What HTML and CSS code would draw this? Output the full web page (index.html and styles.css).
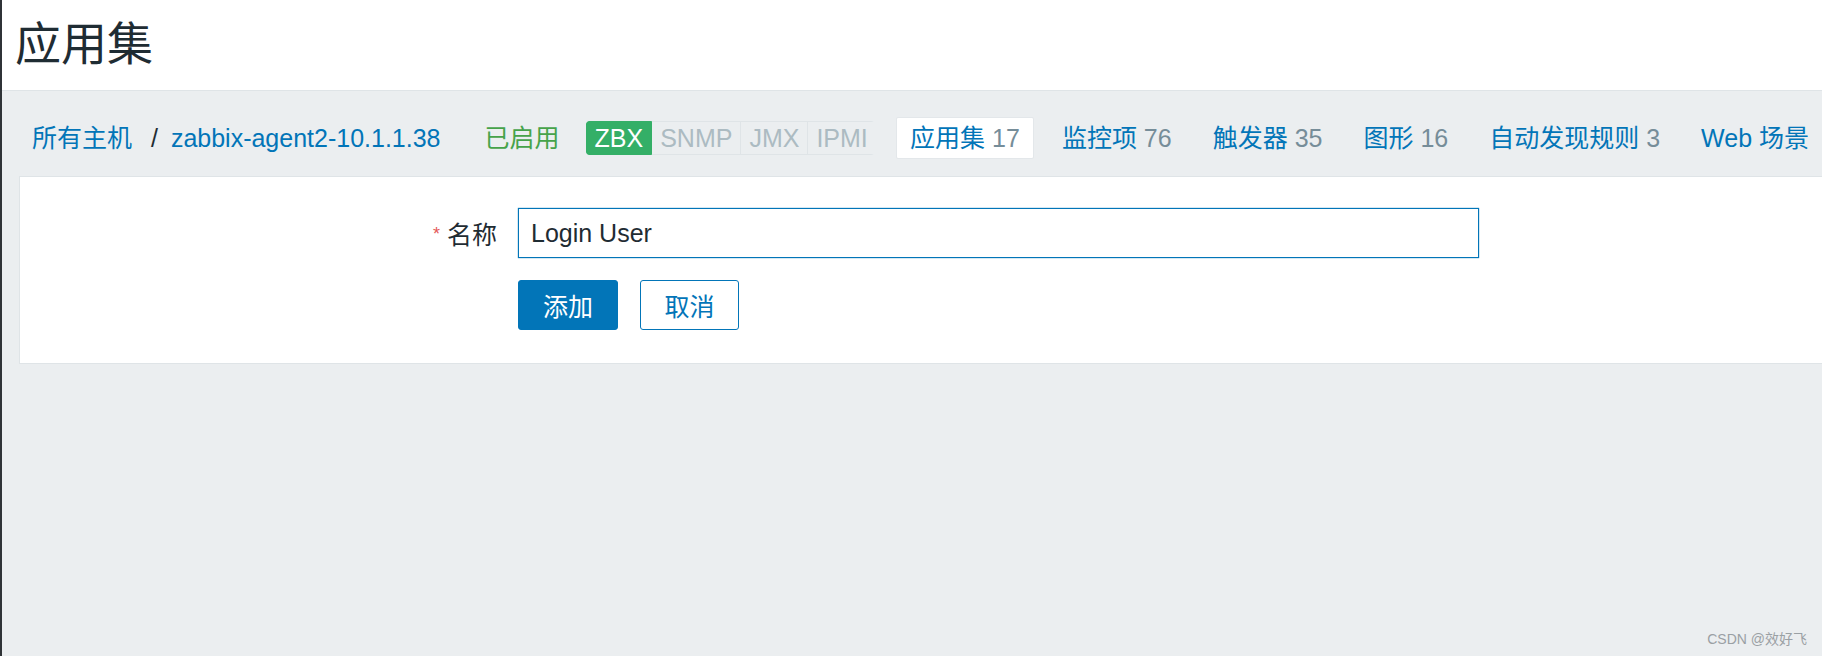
FILE: index.html
```html
<!DOCTYPE html>
<html lang="zh-CN">

<head>
    <meta charset="UTF-8">
    <meta name="viewport" content="width=device-width, initial-scale=1.0">
    <title>应用集</title>
    <link rel="stylesheet" href="styles.css">
</head>

<body>
    <header class="page-header">
        <h1 class="page-title">应用集</h1>
    </header>

    <nav class="host-nav">
        <div class="nav-item breadcrumbs">
            <a class="link">所有主机</a>
            <span class="sep">/</span>
            <a class="link">zabbix-agent2-10.1.1.38</a>
        </div>
        <div class="nav-item status-on">已启用</div>
        <div class="avail">
            <span class="avail-badge green">ZBX</span>
            <span class="avail-badge">SNMP</span>
            <span class="avail-badge">JMX</span>
            <span class="avail-badge">IPMI</span>
        </div>
        <div class="nav-item tab-active"><a class="link">应用集</a> <span class="count">17</span></div>
        <div class="nav-item"><a class="link">监控项</a> <span class="count">76</span></div>
        <div class="nav-item"><a class="link">触发器</a> <span class="count">35</span></div>
        <div class="nav-item"><a class="link">图形</a> <span class="count">16</span></div>
        <div class="nav-item"><a class="link">自动发现规则</a> <span class="count">3</span></div>
        <div class="nav-item"><a class="link">Web 场景</a></div>
    </nav>

    <main class="form-box">
        <div class="form-grid">
            <label class="form-label"><span class="req">*</span> 名称</label>
            <input class="text-input" type="text" value="Login User">
            <div></div>
            <div class="btn-row">
                <button class="btn btn-primary">添加</button>
                <button class="btn btn-alt">取消</button>
            </div>
        </div>
    </main>

    <div class="watermark">CSDN @效好飞</div>
</body>

</html>
```

FILE: styles.css
```css
* {
    box-sizing: border-box;
}

html,
body {
    margin: 0;
    height: 100%;
}

body {
    position: relative;
    background: #ebeef0;
    border-left: 2px solid #2f3337;
    color: #1f2c33;
    font-family: "Liberation Sans", "Noto Sans CJK SC", sans-serif;
    font-size: 25px;
    overflow: hidden;
}

.page-header {
    height: 91px;
    background: #fff;
    border-bottom: 1px solid #dfe4e7;
    display: flex;
    align-items: center;
    padding-left: 13px;
}

.page-title {
    margin: 0;
    font-size: 46px;
    font-weight: normal;
    line-height: 1;
    color: #1f2c33;
    padding-bottom: 2px;
}

/* 主机导航 */
.host-nav {
    display: flex;
    align-items: center;
    height: 85px;
    padding: 8px 0 0 17px;
    white-space: nowrap;
}

.nav-item {
    padding: 0 13px;
    margin-left: 15px;
    line-height: 42px;
}

.nav-item.breadcrumbs {
    margin-left: 0;
}

.link {
    color: #0275b8;
    cursor: pointer;
}

.sep {
    margin: 0 6px 0 12px;
    color: #1f2c33;
}

.count {
    color: #768d99;
}

.status-on {
    margin-left: 18px;
    color: #46a34a;
}

.avail {
    display: flex;
    margin-left: 13px;
    border-radius: 3px;
    overflow: hidden;
}

.avail-badge {
    height: 34px;
    line-height: 32px;
    padding: 0 8px;
    background: #ebeef0;
    border: 1px solid #dfe4e7;
    border-left-width: 0;
    color: #acbbc2;
}

.avail-badge:last-child {
    border-radius: 0 3px 3px 0;
}

.avail-badge.green {
    background: #34af67;
    border-color: #34af67;
    color: #fff;
    border-left-width: 1px;
    border-radius: 3px 0 0 3px;
}

.tab-active {
    margin-left: 22px;
    background: #fff;
    border: 1px solid #e3e7ea;
    border-radius: 2px;
    line-height: 40px;
}

/* 表单 */
.form-box {
    margin-left: 17px;
    background: #fff;
    border: 1px solid #dfe4e7;
    border-right: none;
    padding: 31px 0 33px 0;
}

.form-grid {
    display: grid;
    grid-template-columns: 477px 961px;
    column-gap: 21px;
    row-gap: 22px;
    align-items: center;
}

.form-label {
    text-align: right;
    color: #1f2c33;
}

.req {
    color: #e45959;
    font-size: 18px;
    vertical-align: 4px;
}

.text-input {
    width: 961px;
    height: 50px;
    padding: 0 12px;
    border: 1px solid #0275b8;
    box-shadow: 0 0 1px 0 #0275b8;
    font-family: "Liberation Sans", "Noto Sans CJK SC", sans-serif;
    font-size: 25px;
    color: #1f2c33;
    outline: none;
}

.btn-row {
    display: flex;
    gap: 22px;
}

.btn {
    height: 50px;
    width: 100px;
    border-radius: 3px;
    font-family: "Liberation Sans", "Noto Sans CJK SC", sans-serif;
    font-size: 25px;
    cursor: pointer;
}

.btn-primary {
    background: #0275b8;
    border: 1px solid #0275b8;
    color: #fff;
}

.btn-alt {
    width: 99px;
    background: #fff;
    border: 1px solid #0275b8;
    color: #0275b8;
}

.watermark {
    position: absolute;
    right: 15px;
    bottom: 8px;
    font-size: 14px;
    color: #9aa0a4;
}
```
